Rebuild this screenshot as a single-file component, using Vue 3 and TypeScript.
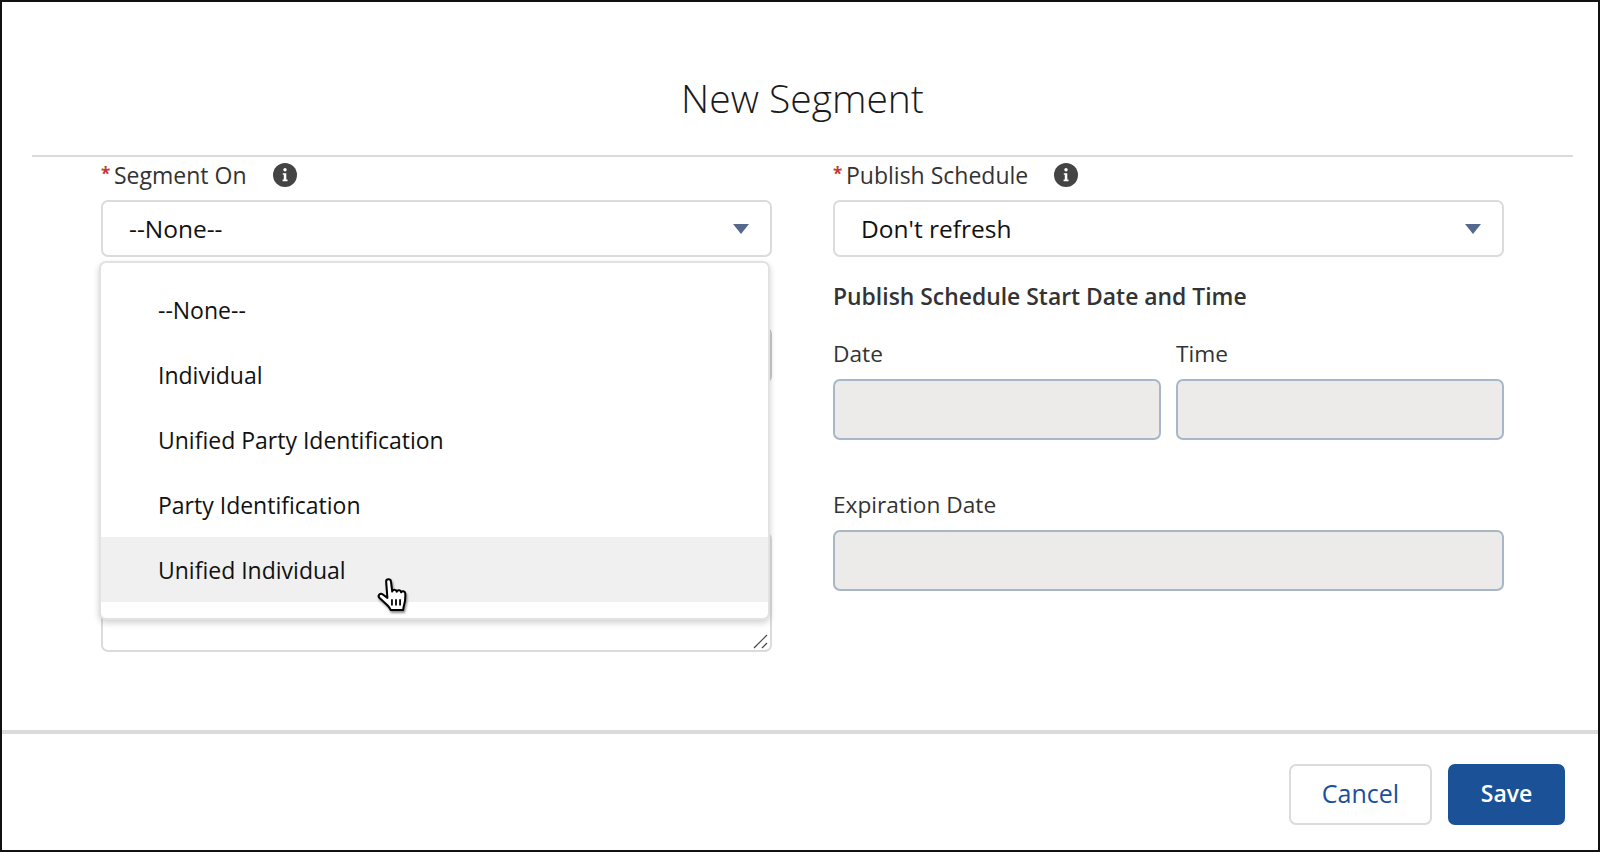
<script setup lang="ts">
const options: string[] = [
  "--None--",
  "Individual",
  "Unified Party Identification",
  "Party Identification",
  "Unified Individual",
];
const hovered = "Unified Individual";
</script>

<template>
  <div class="modal">
    <header class="modal-header">
      <h1>New Segment</h1>
    </header>

    <main class="form">
      <section class="col col-left">
        <div class="field-label">
          <span class="req">*</span>Segment On
          <span class="info">
            <svg viewBox="0 0 24 24" width="24" height="24">
              <circle cx="12" cy="12" r="12" fill="#444" />
              <circle cx="12" cy="6.8" r="1.7" fill="#fff" />
              <path d="M9.8 10.2h3.5v6.4h1.2v1.6H9.6v-1.6h1.2v-4.8h-1z" fill="#fff" />
            </svg>
          </span>
        </div>
        <div class="select">
          <span>--None--</span>
          <i class="caret"></i>
        </div>

        <div class="behind-input"></div>
        <div class="behind-area">
          <svg class="grip" viewBox="0 0 16 16" width="16" height="16">
            <path d="M1 15L14 2M9 15l5-5" stroke="#444" stroke-width="1.2" fill="none" />
          </svg>
        </div>

        <ul class="menu">
          <li v-for="o in options" :key="o" :class="{ hover: o === hovered }">
            {{ o }}
            <svg v-if="o === hovered" class="hand" viewBox="0 0 30 34" width="38" height="43">
              <path
                d="M8 3.5c0-2.2 3.6-2.2 3.8 0l1 8c.4-2 3.2-1.8 3.6.2.5-1.7 3.2-1.5 3.5.4.6-1.4 3-1 3.2.8.2 3-.2 7-1 9.6-.4 1.3-.6 2.6-.6 3.6H11.6c-.4-1.6-1.4-2.6-2.8-4L2.6 16.4c-1.6-2 .8-4.2 2.8-2.6l3.6 2.8z"
                fill="#fff"
                stroke="#000"
                stroke-width="1.6"
                stroke-linejoin="round"
              />
              <path d="M12.6 17.5v5M15.8 17.5v5M19 17.5v5" stroke="#000" stroke-width="1.4" />
            </svg>
          </li>
        </ul>
      </section>

      <section class="col">
        <div class="field-label">
          <span class="req">*</span>Publish Schedule
          <span class="info">
            <svg viewBox="0 0 24 24" width="24" height="24">
              <circle cx="12" cy="12" r="12" fill="#444" />
              <circle cx="12" cy="6.8" r="1.7" fill="#fff" />
              <path d="M9.8 10.2h3.5v6.4h1.2v1.6H9.6v-1.6h1.2v-4.8h-1z" fill="#fff" />
            </svg>
          </span>
        </div>
        <div class="select">
          <span>Don't refresh</span>
          <i class="caret"></i>
        </div>

        <h2 class="sub-title">Publish Schedule Start Date and Time</h2>

        <div class="date-row">
          <div class="date-cell">
            <label>Date</label>
            <div class="disabled-input"></div>
          </div>
          <div class="date-cell">
            <label>Time</label>
            <div class="disabled-input"></div>
          </div>
        </div>

        <div class="expiry">
          <label>Expiration Date</label>
          <div class="disabled-input"></div>
        </div>
      </section>
    </main>

    <footer class="modal-footer">
      <button class="btn btn-cancel">Cancel</button>
      <button class="btn btn-save">Save</button>
    </footer>
  </div>
</template>

<style scoped>
.modal {
  box-sizing: border-box;
  width: 1600px;
  height: 852px;
  border: 2px solid #111;
  background: #fff;
  display: flex;
  flex-direction: column;
  font-family: "Open Sans", "Liberation Sans", sans-serif;
  color: #181818;
}

.modal-header {
  box-sizing: border-box;
  height: 155px;
  margin: 0 25px 0 30px;
  border-bottom: 2px solid #dddbda;
  padding-top: 71px;
}

.modal-header h1 {
  margin: 0;
  text-align: center;
  font-size: 39px;
  font-weight: 300;
  line-height: 50px;
  color: #1a1a1a;
}

.form {
  flex: 1;
  display: grid;
  grid-template-columns: 671px 671px;
  column-gap: 61px;
  padding-left: 99px;
}

.col {
  display: flex;
  flex-direction: column;
  min-width: 0;
}

.col-left {
  position: relative;
}

.field-label {
  display: flex;
  align-items: center;
  height: 36px;
  font-size: 23px;
  color: #333;
}

.req {
  color: #c23934;
  font-size: 17px;
  font-weight: 700;
  width: 13px;
  margin-top: -4px;
}

.info {
  display: flex;
  margin-left: 26px;
}

.select {
  box-sizing: border-box;
  height: 57px;
  margin-top: 7px;
  border: 2px solid #dddbda;
  border-radius: 7px;
  display: flex;
  align-items: center;
  justify-content: space-between;
  padding: 0 21px 0 26px;
  font-size: 24.5px;
  color: #111;
}

.caret {
  width: 0;
  height: 0;
  border-left: 8px solid transparent;
  border-right: 8px solid transparent;
  border-top: 10px solid #54698d;
}

.behind-input {
  box-sizing: border-box;
  height: 56px;
  margin-top: 70px;
  border: 2px solid #c9c9c9;
  border-radius: 7px;
}

.behind-area {
  box-sizing: border-box;
  height: 120px;
  margin-top: 149px;
  border: 2px solid #dddbda;
  border-radius: 7px;
  display: flex;
  align-items: flex-end;
  justify-content: flex-end;
}

.grip {
  margin: 0 1px 1px 0;
}

.menu {
  position: absolute;
  top: 104px;
  left: -2px;
  box-sizing: border-box;
  width: 671px;
  height: 359px;
  margin: 0;
  padding: 14px 0 15px;
  list-style: none;
  background: #fff;
  border: 2px solid #e2e2e2;
  border-radius: 7px;
  box-shadow: 0 3px 6px rgba(0, 0, 0, 0.18);
}

.menu li {
  position: relative;
  height: 65px;
  display: flex;
  align-items: center;
  padding-left: 57px;
  font-size: 23px;
  color: #111;
}

.menu li.hover {
  background: #f0f0f0;
}

.hand {
  position: absolute;
  left: 275px;
  top: 40px;
  filter: drop-shadow(1px 2px 1px rgba(0, 0, 0, 0.45));
}

.sub-title {
  margin: 25px 0 0;
  font-size: 22.9px;
  font-weight: 600;
  line-height: 30px;
  color: #333;
}

.date-row {
  display: grid;
  grid-template-columns: 328px 328px;
  column-gap: 15px;
  margin-top: 28px;
}

.date-cell,
.expiry {
  display: flex;
  flex-direction: column;
}

.col label {
  font-size: 22.7px;
  line-height: 28px;
  color: #333;
}

.disabled-input {
  box-sizing: border-box;
  height: 61px;
  margin-top: 11px;
  background: #ecebea;
  border: 2px solid #a8b7c7;
  border-radius: 7px;
}

.expiry {
  margin-top: 51px;
}

.modal-footer {
  box-sizing: border-box;
  height: 120px;
  border-top: 4px solid #dddbda;
  display: flex;
  justify-content: flex-end;
  align-items: flex-start;
  gap: 16px;
  padding: 30px 33px 0 0;
}

.btn {
  box-sizing: border-box;
  height: 61px;
  padding: 0 0 4px;
  border-radius: 7px;
  font-family: inherit;
}

.btn-cancel {
  width: 143px;
  background: #fff;
  border: 2px solid #dddbda;
  color: #1b4f9c;
  font-size: 25px;
}

.btn-save {
  width: 117px;
  background: #1b5297;
  border: 2px solid #1b5297;
  color: #fff;
  font-size: 23px;
  font-weight: 600;
}
</style>
